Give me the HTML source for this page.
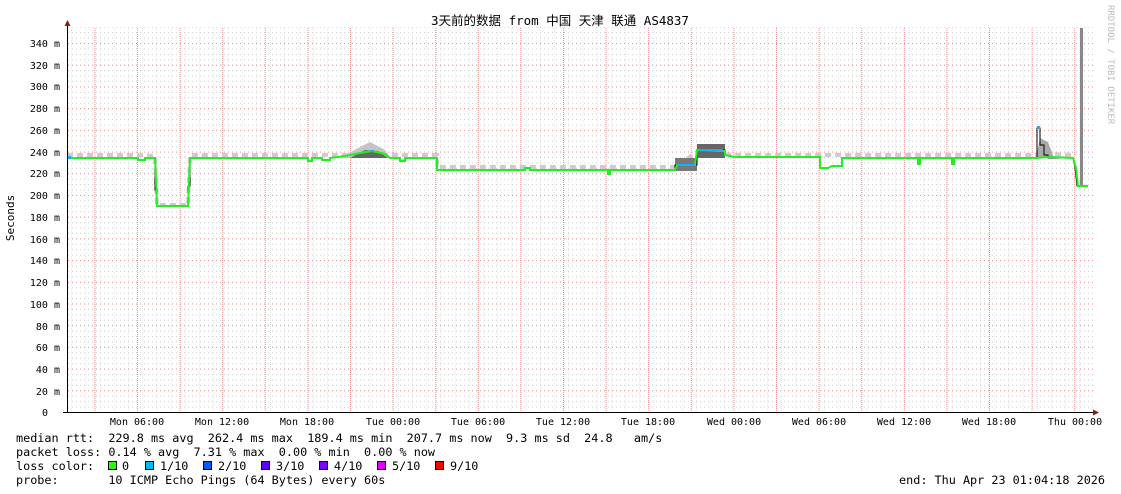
<!DOCTYPE html>
<html><head><meta charset="utf-8"><style>
html,body{margin:0;padding:0;background:#fff;width:1121px;height:494px;overflow:hidden}
svg{display:block}
text{font-family:"DejaVu Sans Mono","Liberation Mono","Noto Sans CJK SC",monospace;font-size:10px;fill:#000;white-space:pre}
.lg{font-size:11.8px}
</style></head><body>
<svg width="1121" height="494" viewBox="0 0 1121 494" xmlns="http://www.w3.org/2000/svg" xml:space="preserve">
<defs>
<pattern id="hmin" patternUnits="userSpaceOnUse" x="0" y="412" width="4" height="5.426"><line x1="0" y1="0.5" x2="1" y2="0.5" stroke="#cfcfcf" stroke-width="1"/></pattern>
<pattern id="vmin" patternUnits="userSpaceOnUse" x="0.5" y="0" width="14.2" height="2"><line x1="0" y1="0" x2="0" y2="1" stroke="#cfcfcf" stroke-width="1"/></pattern>
<pattern id="hmaj" patternUnits="userSpaceOnUse" x="0" y="412" width="4" height="21.703"><line x1="0" y1="0.5" x2="1" y2="0.5" stroke="#f08f8f" stroke-width="1"/></pattern>
<pattern id="vmaj" patternUnits="userSpaceOnUse" x="94.4" y="0" width="42.6" height="2"><line x1="0.5" y1="0" x2="0.5" y2="1" stroke="#f08f8f" stroke-width="1"/></pattern>
</defs>
<rect x="68" y="27" width="1025" height="385" fill="url(#hmin)"/>
<rect x="68" y="27" width="1025" height="385" fill="url(#vmin)"/>
<rect x="68" y="27" width="1025" height="385" fill="url(#hmaj)"/>
<rect x="68" y="27" width="1025" height="385" fill="url(#vmaj)"/>
<text x="560" y="25" text-anchor="middle" style="font-family:'DejaVu Sans Mono','Noto Sans CJK SC',monospace;font-size:12.5px">3天前的数据 from 中国 天津 联通 AS4837</text>
<text transform="translate(1108,5) rotate(90)" style="font-size:9px;fill:#bbb">RRDTOOL / TOBI OETIKER</text>
<text transform="translate(14,218) rotate(-90)" text-anchor="middle" class="lg" style="font-size:11px">Seconds</text>
<g text-anchor="end">
<text x="60" y="47">340 m</text><text x="60" y="69">320 m</text><text x="60" y="90">300 m</text><text x="60" y="112">280 m</text><text x="60" y="134">260 m</text><text x="60" y="156">240 m</text><text x="60" y="177">220 m</text><text x="60" y="199">200 m</text><text x="60" y="221">180 m</text><text x="60" y="243">160 m</text><text x="60" y="264">140 m</text><text x="60" y="286">120 m</text><text x="60" y="308">100 m</text><text x="60" y="330">80 m</text><text x="60" y="351">60 m</text><text x="60" y="373">40 m</text><text x="60" y="395">20 m</text><text x="48" y="416">0</text>
</g>
<g text-anchor="middle">
<text x="137" y="425">Mon 06:00</text><text x="222" y="425">Mon 12:00</text><text x="307" y="425">Mon 18:00</text><text x="393" y="425">Tue 00:00</text><text x="478" y="425">Tue 06:00</text><text x="563" y="425">Tue 12:00</text><text x="648" y="425">Tue 18:00</text><text x="734" y="425">Wed 00:00</text><text x="819" y="425">Wed 06:00</text><text x="904" y="425">Wed 12:00</text><text x="989" y="425">Wed 18:00</text><text x="1075" y="425">Thu 00:00</text>
</g>
<!-- smoke -->
<polyline fill="none" stroke="#cccccc" stroke-width="4" stroke-dasharray="6 4" points="67,155 137,155 155,156 157,205 188,205 190,155 308,155 390,155 437,155 437,167 525,167 675,167 697,152 735,155 820,155 842,155 1035,155 1050,154 1073,155"/>
<path d="M340,158 L360,147 L370,142 L385,150 L390,158 Z" fill="#c4c4c4"/>
<path d="M350,158 L365,150 L378,151 L388,158 Z" fill="#666"/>
<rect x="675" y="158" width="22" height="13" fill="#777"/>
<rect x="697" y="144" width="28" height="14" fill="#666"/>
<path d="M1036,158 L1040,138 L1048,142 L1054,158 Z" fill="#aaa"/>
<rect x="1080" y="28" width="3" height="158" fill="#888"/>
<!-- median line -->
<polyline fill="none" stroke="#000" stroke-width="1" points="67,158 138,158 138,160 145,160 145,158 155,158 155,190 157,190 157,206 188,206 188,186 190,186 190,158 308,158 308,161 312,161 312,158 322,158 322,160 330,160 330,158 345,156 360,153 372,151 385,154 390,158 400,158 400,161 405,161 405,158 437,158 437,170 525,170 525,168 530,168 530,170 608,170 608,174 610,174 610,170 675,170 675,165 697,165 697,150 725,150 725,155 735,157 820,157 820,168 828,168 832,166 836,166 842,166 842,158 918,158 918,164 920,164 920,158 952,158 952,164 954,164 954,158 1037,158 1037,128 1040,128 1040,145 1044,145 1044,155 1048,155 1048,158 1073,158 1075,168 1077,186 1088,186"/>
<polyline fill="none" stroke="#22ee22" stroke-width="2" points="67,158 138,158 138,160 145,160 145,158 155,158 157,206 188,206 190,158 308,158 308,161 312,161 312,158 322,158 322,160 330,160 330,158 345,156 360,153 372,151 385,154 390,158 400,158 400,161 405,161 405,158 437,158 437,170 525,170 525,168 530,168 530,170 608,170 608,174 610,174 610,170 675,170 677,165 695,165 697,150 725,151 725,155 735,157 820,157 820,168 828,168 832,166 836,166 842,166 842,158 918,158 918,164 920,164 920,158 952,158 952,164 954,164 954,158 1035,158 1050,157 1073,158 1076,168 1078,186 1088,186"/>
<rect x="67" y="156" width="4" height="3" fill="#1ab0f0"/>
<rect x="677" y="164" width="18" height="2" fill="#1ab0f0"/>
<rect x="699" y="149" width="24" height="2" fill="#1ab0f0"/>
<rect x="1037" y="126" width="3" height="3" fill="#1ab0f0"/>
<rect x="370" y="150" width="4" height="2" fill="#1ab0f0"/>
<!-- axes -->
<line x1="67.5" y1="22" x2="67.5" y2="413" stroke="#000"/>
<line x1="63" y1="412.5" x2="1097" y2="412.5" stroke="#000"/>
<path d="M64.5,26 L67.5,20 L70.5,26 Z" fill="#8b1a1a"/>
<path d="M1093,409.5 L1099,412.5 L1093,415.5 Z" fill="#8b1a1a"/>
<text class="lg" x="16" y="442">median rtt:  229.8 ms avg  262.4 ms max  189.4 ms min  207.7 ms now  9.3 ms sd  24.8   am/s</text>
<text class="lg" x="16" y="456">packet loss: 0.14 % avg  7.31 % max  0.00 % min  0.00 % now</text>
<text class="lg" x="16" y="470">loss color:</text>
<g stroke="#000" stroke-width="1">
<rect x="108.5" y="461.5" width="8" height="8" fill="#26ff00"/>
<rect x="145.5" y="461.5" width="8" height="8" fill="#00b8ff"/>
<rect x="203.5" y="461.5" width="8" height="8" fill="#0059ff"/>
<rect x="261.5" y="461.5" width="8" height="8" fill="#5e00ff"/>
<rect x="319.5" y="461.5" width="8" height="8" fill="#7e00ff"/>
<rect x="377.5" y="461.5" width="8" height="8" fill="#dd00ff"/>
<rect x="435.5" y="461.5" width="8" height="8" fill="#ff0000"/>
</g>
<text class="lg" x="122" y="470">0</text><text class="lg" x="160" y="470">1/10</text><text class="lg" x="218" y="470">2/10</text><text class="lg" x="276" y="470">3/10</text><text class="lg" x="334" y="470">4/10</text><text class="lg" x="392" y="470">5/10</text><text class="lg" x="450" y="470">9/10</text>
<text class="lg" x="16" y="484">probe:       10 ICMP Echo Pings (64 Bytes) every 60s</text>
<text class="lg" x="1105" y="484" text-anchor="end">end: Thu Apr 23 01:04:18 2026</text>
</svg>
</body></html>
